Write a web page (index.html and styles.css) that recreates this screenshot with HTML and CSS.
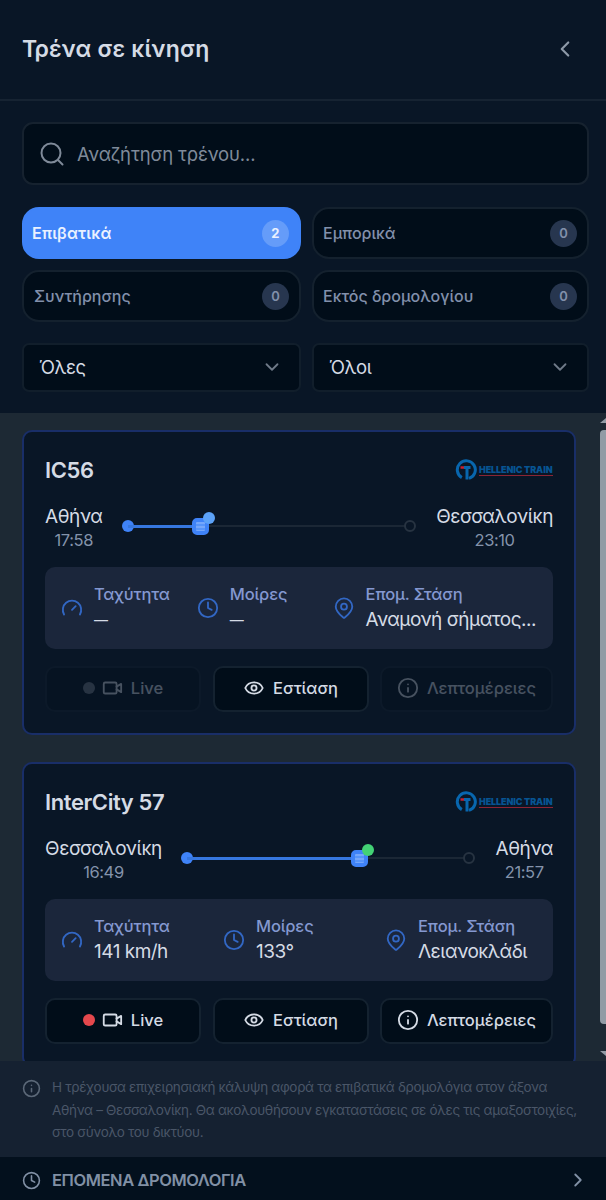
FILE: index.html
```html
<!DOCTYPE html>
<html lang="el">
<head>
    <meta charset="UTF-8">
    <meta name="viewport" content="width=device-width, initial-scale=1.0">
    <title>Τρένα σε κίνηση</title>
    <link rel="stylesheet" href="styles.css">
</head>
<body>

    <!-- Icon set -->
    <svg class="sprite" viewBox="0 0 24 24">
        <symbol id="search" viewBox="0 0 24 24"><circle cx="11" cy="11" r="9.5"/><path d="m22.5 22.5-4.5-4.5"/></symbol>
        <symbol id="left" viewBox="0 0 24 24"><path d="m15 18-6-6 6-6"/></symbol>
        <symbol id="right" viewBox="0 0 24 24"><path d="m9 18 6-6-6-6"/></symbol>
        <symbol id="down" viewBox="0 0 24 24"><path d="m6 9 6 6 6-6"/></symbol>
        <symbol id="gauge" viewBox="0 0 24 24"><path d="m12 14 4-4"/><path d="M3.34 19a10 10 0 1 1 17.32 0"/></symbol>
        <symbol id="clock" viewBox="0 0 24 24"><circle cx="12" cy="12" r="10"/><path d="M12 6v6l4 2"/></symbol>
        <symbol id="pin" viewBox="0 0 24 24"><path d="M21 10.5c0 5-5.8 9.9-8.2 11.9a1.3 1.3 0 0 1-1.6 0C8.8 20.4 3 15.5 3 10.5a9 9 0 0 1 18 0"/><circle cx="12" cy="10.5" r="3.2"/></symbol>
        <symbol id="video" viewBox="0 0 24 24"><rect x="3" y="6" width="14" height="12" rx="1.5"/><path d="m17 10.5 5-3v9l-5-3"/></symbol>
        <symbol id="eye" viewBox="0 0 24 24"><path d="M2.5 12a10.4 10.4 0 0 1 19 0 10.4 10.4 0 0 1-19 0"/><circle cx="12" cy="12" r="2.8"/></symbol>
        <symbol id="info" viewBox="0 0 24 24"><circle cx="12" cy="12" r="10"/><path d="M12 16v-4M12 8h.01"/></symbol>
        <symbol id="logo" viewBox="0 0 22 22">
            <path class="logo-ring" d="M6.8 18.6A9 9 0 1 1 14 19.4"/>
            <path class="logo-t" d="M9 8.5h6.500M12 8v12.500"/>
            <path class="logo-red" d="M5.500 8.500h3.500"/>
        </symbol>
    </svg>

    <header class="header">
        <h1>Τρένα σε κίνηση</h1>
        <svg class="icon close"><use href="#left"/></svg>
    </header>

    <section class="filters">
        <div class="search">
            <svg class="icon"><use href="#search"/></svg>
            <span>Αναζήτηση τρένου...</span>
        </div>

        <div class="types">
            <button class="type active"><span>Επιβατικά</span><b>2</b></button>
            <button class="type"><span>Εμπορικά</span><b>0</b></button>
            <button class="type shift"><span>Συντήρησης</span><b>0</b></button>
            <button class="type"><span>Εκτός δρομολογίου</span><b>0</b></button>
        </div>

        <div class="selects">
            <div class="select"><span>Όλες</span><svg class="icon"><use href="#down"/></svg></div>
            <div class="select"><span>Όλοι</span><svg class="icon"><use href="#down"/></svg></div>
        </div>
    </section>

    <main class="list">
        <div class="cards">
            <article class="card">
                <div class="card-head">
                    <h2>IC56</h2>
                    <div class="brand">
                        <svg><use href="#logo"/></svg>
                        <span>HELLENIC TRAIN</span>
                    </div>
                </div>

                <div class="route">
                    <div class="stop"><span>Αθήνα</span><time>17:58</time></div>
                    <div class="track">
                        <i class="start"></i>
                        <div class="progress" style="width: 25.7%">
                            <div class="train"><i class="status"></i></div>
                        </div>
                        <i class="end"></i>
                    </div>
                    <div class="stop"><span>Θεσσαλονίκη</span><time>23:10</time></div>
                </div>

                <div class="stats">
                    <div class="stat"><svg class="icon"><use href="#gauge"/></svg><p><span>Ταχύτητα</span><strong class="empty">—</strong></p></div>
                    <div class="stat"><svg class="icon"><use href="#clock"/></svg><p><span>Μοίρες</span><strong class="empty">—</strong></p></div>
                    <div class="stat"><svg class="icon"><use href="#pin"/></svg><p><span>Επομ. Στάση</span><strong>Αναμονή σήματος...</strong></p></div>
                </div>

                <div class="actions">
                    <button class="action" disabled><i class="dot"></i><svg class="icon"><use href="#video"/></svg><span>Live</span></button>
                    <button class="action"><svg class="icon"><use href="#eye"/></svg><span>Εστίαση</span></button>
                    <button class="action" disabled><svg class="icon"><use href="#info"/></svg><span>Λεπτομέρειες</span></button>
                </div>
            </article>

            <article class="card">
                <div class="card-head">
                    <h2>InterCity 57</h2>
                    <div class="brand">
                        <svg><use href="#logo"/></svg>
                        <span>HELLENIC TRAIN</span>
                    </div>
                </div>

                <div class="route">
                    <div class="stop"><span>Θεσσαλονίκη</span><time>16:49</time></div>
                    <div class="track">
                        <i class="start"></i>
                        <div class="progress" style="width: 60.8%">
                            <div class="train"><i class="status online"></i></div>
                        </div>
                        <i class="end"></i>
                    </div>
                    <div class="stop"><span>Αθήνα</span><time>21:57</time></div>
                </div>

                <div class="stats">
                    <div class="stat"><svg class="icon"><use href="#gauge"/></svg><p><span>Ταχύτητα</span><strong>141 km/h</strong></p></div>
                    <div class="stat"><svg class="icon"><use href="#clock"/></svg><p><span>Μοίρες</span><strong>133°</strong></p></div>
                    <div class="stat"><svg class="icon"><use href="#pin"/></svg><p><span>Επομ. Στάση</span><strong>Λειανοκλάδι</strong></p></div>
                </div>

                <div class="actions">
                    <button class="action"><i class="dot"></i><svg class="icon"><use href="#video"/></svg><span>Live</span></button>
                    <button class="action"><svg class="icon"><use href="#eye"/></svg><span>Εστίαση</span></button>
                    <button class="action"><svg class="icon"><use href="#info"/></svg><span>Λεπτομέρειες</span></button>
                </div>
            </article>
        </div>

        <div class="scrollbar">
            <i class="arrow up"></i>
            <i class="thumb"></i>
            <i class="arrow"></i>
        </div>
    </main>

    <aside class="notice">
        <svg class="icon"><use href="#info"/></svg>
        <p>
            Η τρέχουσα επιχειρησιακή κάλυψη αφορά τα επιβατικά δρομολόγια στον άξονα<br>
            Αθήνα – Θεσσαλονίκη. Θα ακολουθήσουν εγκαταστάσεις σε όλες τις αμαξοστοιχίες,<br>
            στο σύνολο του δικτύου.
        </p>
    </aside>

    <footer class="upcoming">
        <svg class="icon"><use href="#clock"/></svg>
        <span>ΕΠΟΜΕΝΑ ΔΡΟΜΟΛΟΓΙΑ</span>
        <svg class="icon arrow-right"><use href="#right"/></svg>
    </footer>

</body>
</html>
```
FILE: styles.css
```css
/* General */
* {
    box-sizing: border-box;
}

body {
    margin: 0;
    height: 1200px;
    display: flex;
    flex-direction: column;
    overflow: hidden;
    background: #091626;
    color: #d5dbe5;
    font-family: Inter, "Noto Sans", sans-serif;
    white-space: nowrap;
}

h1, h2, p {
    margin: 0;
}

button {
    font-family: inherit;
    margin: 0;
}

.sprite {
    display: none;
}

.icon {
    width: 22px;
    height: 22px;
    flex-shrink: 0;
    fill: none;
    stroke: currentColor;
    stroke-width: 2;
    stroke-linecap: round;
    stroke-linejoin: round;
}

/* Header */
.header {
    height: 101px;
    flex-shrink: 0;
    padding: 0 28px 2px 22px;
    display: flex;
    align-items: center;
    justify-content: space-between;
    border-bottom: 2px solid #162332;
}

h1 {
    font-size: 23px;
    font-weight: 600;
    letter-spacing: 0.2px;
}

.close {
    width: 26px;
    height: 26px;
    color: #8d99a8;
}

/* Filters */
.filters {
    height: 312px;
    flex-shrink: 0;
    padding: 21px 17px 0 22px;
}

.search {
    height: 63px;
    padding: 0 16px;
    display: flex;
    align-items: center;
    gap: 13px;
    background: #010d19;
    border: 2px solid #16222f;
    border-radius: 11px;
    color: #7f8a99;
    font-size: 18.5px;
    letter-spacing: -0.15px;
}

.search .icon {
    width: 24px;
    height: 24px;
}

.types, .selects {
    display: grid;
    grid-template-columns: 279px 277px;
    column-gap: 11px;
}

.types {
    margin-top: 22px;
    row-gap: 11px;
}

.type {
    height: 52px;
    padding: 0 10px 0 9px;
    display: flex;
    align-items: center;
    justify-content: space-between;
    background: #010d19;
    border: 2px solid #14212e;
    border-radius: 17px;
    color: #8290ab;
    font-size: 16px;
    font-weight: 500;
}

.type.shift {
    padding-left: 10px;
}

.type b {
    width: 27px;
    height: 27px;
    border-radius: 50%;
    background: #27364f;
    font-size: 13px;
    font-weight: 600;
    line-height: 27px;
    text-align: center;
}

.type.active {
    padding-left: 8px;
    background: #3f83f8;
    border-color: #3f83f8;
    color: #eaf1ff;
    font-weight: 600;
    letter-spacing: 0.2px;
}

.type.active b {
    background: #659cf9;
    font-weight: 700;
}

.selects {
    margin-top: 21px;
}

.select {
    height: 49px;
    padding: 0 16px 1px 15px;
    display: flex;
    align-items: center;
    justify-content: space-between;
    background: #010d19;
    border: 2px solid #111e2b;
    border-radius: 7px;
    font-size: 18.5px;
    letter-spacing: -0.4px;
}

.select .icon {
    color: #6f7a88;
}

/* Train list */
.list {
    height: 648px;
    flex-shrink: 0;
    display: flex;
    justify-content: space-between;
    overflow: hidden;
    background: #1d2934;
}

.cards {
    width: 576px;
    padding: 17px 0 0 22px;
}

.card {
    height: 305px;
    margin-bottom: 27px;
    padding: 22px 21px 0;
    background: #091626;
    border: 2px solid #192e68;
    border-radius: 10px;
}

.card-head {
    height: 32px;
    display: flex;
    align-items: center;
    justify-content: space-between;
}

h2 {
    font-size: 22px;
    font-weight: 600;
    letter-spacing: -0.4px;
}

.brand {
    display: flex;
    align-items: center;
    gap: 2px;
}

.brand svg {
    width: 22px;
    height: 22px;
    fill: none;
}

.brand span {
    width: 74px;
    height: 12px;
    border-bottom: 1px solid #8a2434;
    color: #075492;
    font-size: 9px;
    font-weight: 900;
    letter-spacing: -0.1px;
    line-height: 12px;
}

.logo-ring {
    stroke: #0866ae;
    stroke-width: 3;
}

.logo-t {
    stroke: #0866ae;
    stroke-width: 3;
}

.logo-red {
    stroke: #c52032;
    stroke-width: 2.5;
}

/* Route */
.route {
    height: 50px;
    margin-top: 18px;
    display: flex;
    align-items: flex-start;
}

.stop {
    display: flex;
    flex-direction: column;
    align-items: center;
    font-size: 19px;
    letter-spacing: -0.4px;
    line-height: 25px;
}

.stop time {
    color: #8493ab;
    font-size: 16.5px;
    line-height: 22px;
}

.track {
    position: relative;
    flex: 1;
    height: 2px;
    margin: 21px 26px 0 25px;
    background: #1b2735;
}

.progress {
    position: relative;
    height: 3px;
    background: #3677df;
}

.start, .end {
    position: absolute;
    top: -5px;
    width: 12px;
    height: 12px;
    border-radius: 50%;
}

.start {
    left: -6px;
    background: #3f83f8;
}

.end {
    right: -6px;
    background: #091626;
    border: 2px solid #273341;
}

.train {
    position: absolute;
    top: -7px;
    right: -9px;
    width: 17px;
    height: 17px;
    border: 4px solid #3f83f8;
    border-radius: 5px;
    background: repeating-linear-gradient(#75a7fb 0 2px, #5795fa 2px 4px);
}

.status {
    position: absolute;
    top: -10px;
    right: -10px;
    width: 12px;
    height: 12px;
    border-radius: 50%;
    background: #5ca2f8;
}

.status.online {
    background: #43d275;
}

/* Stats */
.stats {
    height: 82px;
    margin-top: 13px;
    padding: 0 17px 2px;
    display: grid;
    grid-template-columns: repeat(3, 1fr);
    column-gap: 12px;
    align-items: center;
    background: #1b263b;
    border-radius: 10px;
}

.stat {
    display: flex;
    align-items: center;
    gap: 10px;
}

.stat .icon {
    margin: 2px 1px 0 -1px;
    color: #3267c4;
}

.stat span, .stat strong {
    display: block;
    line-height: 25px;
}

.stat span {
    color: #8498d0;
    font-size: 16.5px;
    font-weight: 500;
    letter-spacing: -0.15px;
}

.stat strong {
    font-size: 19px;
    font-weight: 400;
    letter-spacing: -0.5px;
}

.stat .empty {
    font-size: 14px;
}

/* Buttons */
.actions {
    margin-top: 17px;
    display: grid;
    grid-template-columns: 156px 156px 173px;
    justify-content: space-between;
}

.action {
    height: 46px;
    padding: 0 0 2px;
    display: flex;
    align-items: center;
    justify-content: center;
    gap: 8px;
    background: #010d19;
    border: 2px solid #142230;
    border-radius: 10px;
    color: #d5dbe5;
    font-size: 16.5px;
    font-weight: 500;
}

.action:disabled {
    opacity: 0.3;
}

.dot {
    width: 12px;
    height: 12px;
    margin-right: -2px;
    border-radius: 50%;
    background: #e5484d;
}

.action:disabled .dot {
    background: #6d7784;
}

/* Scrollbar */
.scrollbar {
    width: 6px;
    padding: 5px 0;
    display: flex;
    flex-direction: column;
    align-items: flex-start;
    justify-content: space-between;
    overflow: hidden;
}

.thumb {
    width: 6px;
    height: 594px;
    margin-bottom: 20px;
    background: #919ba5;
    border-radius: 4px 0 0 4px;
}

.arrow {
    border: 6px solid transparent;
    border-top: 5px solid #919ba5;
    border-bottom: 0;
}

.arrow.up {
    border-top: 0;
    border-bottom: 5px solid #919ba5;
}

/* Notice */
.notice {
    height: 96px;
    flex-shrink: 0;
    padding: 15px 22px 0;
    display: flex;
    gap: 11px;
    background: #152131;
    color: #4a5668;
    font-size: 13.5px;
    letter-spacing: -0.32px;
    line-height: 22.5px;
}

.notice .icon, .upcoming .icon {
    width: 19px;
    height: 19px;
}

.notice .icon {
    margin-top: 3px;
    color: #5b6878;
}

/* Upcoming trips */
.upcoming {
    flex: 1;
    padding: 3px 17px 0 22px;
    display: flex;
    align-items: center;
    gap: 11px;
    background: #03101d;
    color: #8190a5;
    font-size: 16.5px;
    font-weight: 600;
    letter-spacing: -0.43px;
}

.upcoming .arrow-right {
    width: 22px;
    height: 22px;
    margin-left: auto;
}
```
